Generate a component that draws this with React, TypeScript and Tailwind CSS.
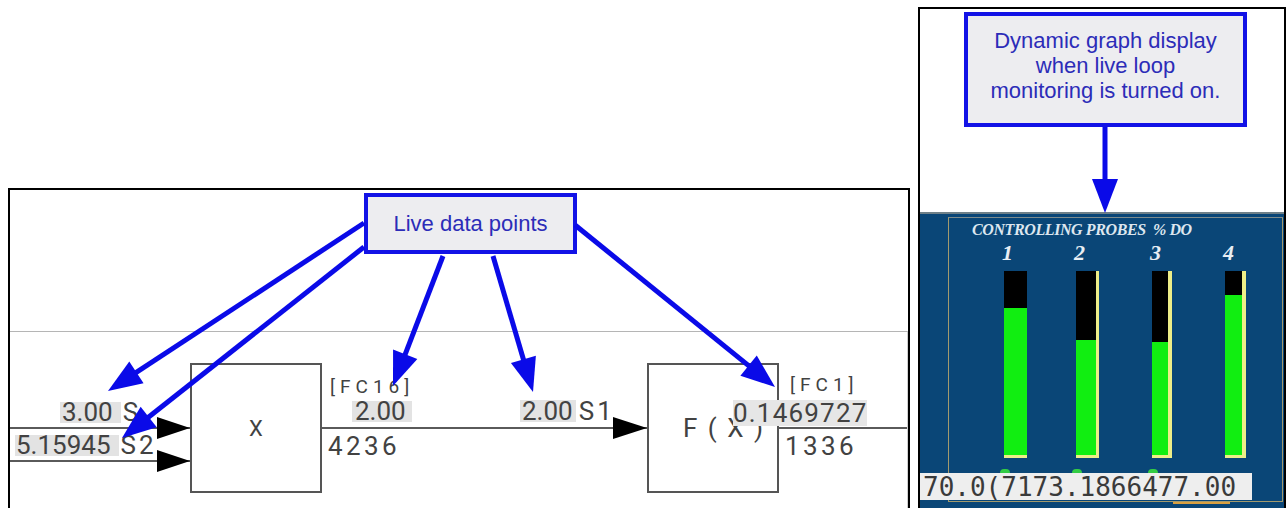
import React from "react";

// ── helpers ───────────────────────────────────────────────────────────────────

type Pt = [number, number];

// blue callout arrow: shaft + filled head, page coordinates
function BlueArrow({ from, to }: { from: Pt; to: Pt }) {
  const [x1, y1] = from;
  const [x2, y2] = to;
  const L = 34;
  const W = 13;
  const dx = x2 - x1;
  const dy = y2 - y1;
  const len = Math.hypot(dx, dy);
  const ux = dx / len;
  const uy = dy / len;
  const bx = x2 - ux * L;
  const by = y2 - uy * L;
  const px = -uy;
  const py = ux;
  const pts = [
    [x2, y2],
    [bx + px * W, by + py * W],
    [bx - px * W, by - py * W],
  ]
    .map((p) => p.join(","))
    .join(" ");
  return (
    <g>
      <line
        x1={x1}
        y1={y1}
        x2={bx + ux * 2}
        y2={by + uy * 2}
        stroke="#0a0ae8"
        strokeWidth={5}
      />
      <polygon points={pts} fill="#0a0ae8" />
    </g>
  );
}

const bars = [
  { col: "w-[72px]", bar: "w-[23px] border-r-0", black: "h-[37px]", dot: true },
  { col: "w-[76px]", bar: "w-[23px] border-r-[3px]", black: "h-[69px]", dot: true },
  { col: "w-[73px]", bar: "w-[20px] border-r-[4px]", black: "h-[71px]", dot: true },
  { col: "w-[40px]", bar: "w-[21px] border-r-[4px]", black: "h-[24px]", dot: false },
];

// ── Page ──────────────────────────────────────────────────────────────────────

export default function App() {
  return (
    <div className="relative w-[1286px] h-[508px] overflow-hidden bg-white flex items-start">
      {/* Left panel: loop diagram */}
      <div className="ml-[8px] mt-[188px] w-[902px] h-[322px] shrink-0 border-2 border-black bg-white flex flex-col">
        <div className="h-[141px] shrink-0">
          <div className="ml-[354px] mt-[3px] w-[213px] h-[61px] border-4 border-[#1212e6] bg-[#ededf0] flex items-center justify-center font-['Liberation_Sans',Arial,sans-serif] text-[22px] text-[#2c2cb8]">
            Live data points
          </div>
        </div>

        <div className="relative flex-1 border-t border-[#b5b5b5] border-r border-r-[#d0d0d0] font-['Roboto',sans-serif] text-[#424242]">
          <svg
            className="absolute left-0 top-0"
            width={897}
            height={176}
            viewBox="10 332 897 176"
          >
            <g stroke="#5a5a5a" strokeWidth={2}>
              <line x1={10} y1={428} x2={190} y2={428} />
              <line x1={10} y1={461} x2={190} y2={461} />
              <line x1={322} y1={428} x2={647} y2={428} />
              <line x1={779} y1={428} x2={907} y2={428} />
            </g>
            <g fill="#000">
              <polygon points="157,417 190,428 157,439" />
              <polygon points="157,450 190,461 157,472" />
              <polygon points="613,417 647,428 613,439" />
            </g>
          </svg>

          {/* blocks */}
          <div className="absolute left-[180px] top-[31px] w-[132px] h-[130px] border-2 border-[#555] bg-white flex items-center justify-center text-[22px]">
            X
          </div>
          <div className="absolute left-[637px] top-[31px] w-[132px] h-[130px] border-2 border-[#555] bg-white" />
          <div className="absolute left-[673px] top-[83px] text-[26px] leading-[26px] tracking-[2px] whitespace-pre">
            F ( X )
          </div>

          {/* inputs */}
          <div className="absolute left-[50px] top-[70px] flex text-[26px] leading-[21px]">
            <span className="h-[21px] bg-[#e3e3e3] pl-[2px] pr-[8px]">3.00</span>
            <span className="ml-[2px]">S</span>
          </div>
          <div className="absolute left-[5px] top-[103px] flex text-[26px] leading-[21px]">
            <span className="h-[21px] bg-[#e3e3e3] pl-[1px] pr-[8px]">5.15945</span>
            <span className="ml-[2px] tracking-[3px]">S2</span>
          </div>

          {/* X outputs */}
          <div className="absolute left-[320px] top-[45px] text-[19px] leading-[19px] tracking-[5px]">
            [FC16]
          </div>
          <div className="absolute left-[342px] top-[69px] h-[21px] bg-[#e3e3e3] pl-[3px] pr-[6px] text-[26px] leading-[21px]">
            2.00
          </div>
          <div className="absolute left-[318px] top-[101px] text-[26px] leading-[26px] tracking-[3.4px]">
            4236
          </div>

          {/* F(X) input */}
          <div className="absolute left-[510px] top-[68px] flex text-[26px] leading-[22px]">
            <span className="h-[22px] bg-[#e3e3e3] pl-[2px] pr-[3px]">2.00</span>
            <span className="ml-[3px] tracking-[3px]">S1</span>
          </div>

          {/* F(X) outputs */}
          <div className="absolute left-[780px] top-[43px] text-[19px] leading-[19px] tracking-[5px]">
            [FC1]
          </div>
          <div className="absolute left-[723px] top-[68px] w-[134px] h-[26px] bg-[#e6e6e6] text-[26px] leading-[26px] tracking-[1.2px]">
            0.1469727
          </div>
          <div className="absolute left-[775px] top-[101px] text-[26px] leading-[26px] tracking-[3.4px]">
            1336
          </div>
        </div>
      </div>

      {/* Right panel: live graph */}
      <div className="ml-[8px] mt-[7px] w-[368px] h-[510px] shrink-0 border-2 border-black bg-white flex flex-col">
        <div className="h-[203px] shrink-0">
          <div className="ml-[44px] mt-[3px] w-[283px] h-[115px] border-4 border-[#1212e6] bg-[#ededf0] flex items-center justify-center pb-[8px] text-center font-['Liberation_Sans',Arial,sans-serif] text-[22px] leading-[25px] text-[#2c2cb8]">
            <p>
              Dynamic graph display
              <br />
              when live loop
              <br />
              monitoring is turned on.
            </p>
          </div>
        </div>

        <div className="relative flex-1 bg-[#0a4677] border-t-2 border-[#6f8088]">
          <div className="ml-[28px] mt-[3px] w-[335px] h-[285px] border border-[#a29a6e] border-t-[#7f8c8c] font-['Liberation_Serif','Times_New_Roman',serif] font-bold italic">
            <div className="ml-[23px] mt-[4px] text-[16px] leading-[16px] tracking-[-0.4px] text-[#dde6ef] whitespace-pre">
              CONTROLLING PROBES  % DO
            </div>
            <div className="ml-[55px] mt-[4px] flex">
              {bars.map((b, i) => (
                <div key={i} className={`${b.col} flex flex-col items-start`}>
                  <div className="-ml-0.5 text-[22px] leading-[22px] text-[#e8eef4]">{i + 1}</div>
                  <div className={`${b.bar} mt-[7px] h-[187px] flex flex-col border-b-[3px] border-[#eeee88]`}>
                    <div className={`${b.black} bg-black`} />
                    <div className="flex-1 bg-[#11ee11]" />
                  </div>
                  {b.dot && <div className="-ml-1 mt-[11px] w-[10px] h-[8px] rounded-full bg-[#33cc44]" />}
                </div>
              ))}
            </div>
          </div>

          {/* live value readout lies over the frame */}
          <div className="absolute left-0 top-[259px] w-[332px] h-[27px] bg-[#eeeeee] pl-[3px] pt-[1px] font-['DejaVu_Sans_Mono',monospace] text-[26px] leading-[27px] text-[#3a3a3a]">
            70.0(7173.1866477.00
          </div>
          <div className="absolute left-[253px] top-[288px] w-[57px] h-[2px] bg-[#d9a040]" />
        </div>
      </div>

      {/* callout arrows */}
      <svg className="absolute left-0 top-0 pointer-events-none" width={1286} height={508}>
        <BlueArrow from={[364, 223]} to={[108, 391]} />
        <BlueArrow from={[364, 247]} to={[122, 438]} />
        <BlueArrow from={[443, 256]} to={[393, 386]} />
        <BlueArrow from={[493, 256]} to={[533, 392]} />
        <BlueArrow from={[575, 225]} to={[775, 387]} />
        <BlueArrow from={[1105, 127]} to={[1105, 213]} />
      </svg>
    </div>
  );
}
